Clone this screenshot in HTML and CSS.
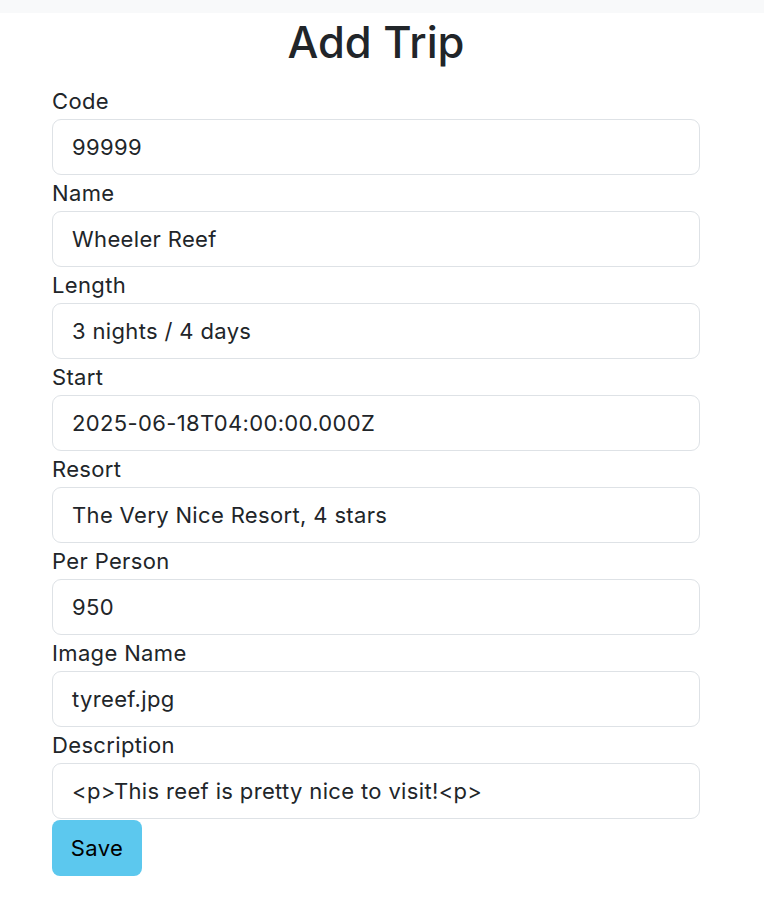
FILE: index.html
```html
<!DOCTYPE html>
<html>
<head>
<meta charset="utf-8">
<link rel="stylesheet" href="styles.css">
</head>
<body>
<div class="topbar"></div>
<div class="container">
  <h1 class="title">Add Trip</h1>
  <form class="trip-form">
    <div class="field"><label class="form-label">Code</label><div class="form-control">99999</div></div>
    <div class="field"><label class="form-label">Name</label><div class="form-control">Wheeler Reef</div></div>
    <div class="field"><label class="form-label">Length</label><div class="form-control">3 nights / 4 days</div></div>
    <div class="field"><label class="form-label">Start</label><div class="form-control">2025-06-18T04:00:00.000Z</div></div>
    <div class="field"><label class="form-label">Resort</label><div class="form-control">The Very Nice Resort, 4 stars</div></div>
    <div class="field"><label class="form-label">Per Person</label><div class="form-control">950</div></div>
    <div class="field"><label class="form-label">Image Name</label><div class="form-control">tyreef.jpg</div></div>
    <div class="field"><label class="form-label">Description</label><div class="form-control">&lt;p&gt;This reef is pretty nice to visit!&lt;p&gt;</div></div>
    <button type="button" class="btn-save">Save</button>
  </form>
</div>
</body>
</html>
```
FILE: styles.css
```css
* { box-sizing: border-box; }
html, body { margin: 0; padding: 0; background: #fff; }
body {
  font-family: Inter, "Liberation Sans", sans-serif;
  color: #212529;
  font-size: 22px;
  letter-spacing: 0.35px;
}
.topbar { height: 13px; background: #f8f9fa; }
.container { margin-left: 52px; width: 648px; }
.title {
  margin: 2px 0 13px;
  font-size: 43.5px;
  font-weight: 500;
  line-height: 55px;
  letter-spacing: 0;
  text-align: center;
}
.trip-form { display: flex; flex-direction: column; }
.field { display: flex; flex-direction: column; }
.form-label { line-height: 33px; padding-top: 2px; margin-bottom: 1px; }
.form-control {
  height: 56px;
  border: 1px solid #dee2e6;
  border-radius: 9px;
  padding: 0 19px;
  display: flex;
  align-items: center;
  background: #fff;
}
.btn-save {
  align-self: flex-start;
  margin-top: 1px;
  width: 90px;
  height: 56px;
  border: 0;
  border-radius: 8px;
  background: #5cc8ee;
  color: #000;
  font: inherit;
  letter-spacing: 0.35px;
}
```
